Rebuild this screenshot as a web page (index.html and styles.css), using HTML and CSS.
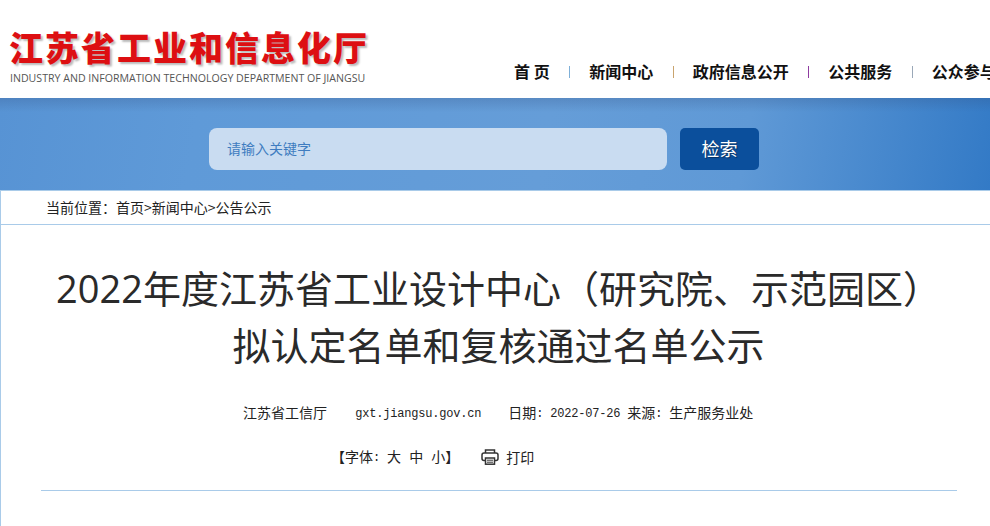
FILE: index.html
```html
<!DOCTYPE html>
<html lang="zh-CN">
<head>
    <meta charset="UTF-8">
    <title>2022年度江苏省工业设计中心（研究院、示范园区）拟认定名单和复核通过名单公示</title>
    <link rel="stylesheet" href="styles.css">
</head>
<body>
    <!-- Header -->
    <div class="header">
        <div class="logo">
            <div class="logo-cn">江苏省工业和信息化厅</div>
            <div class="logo-en">INDUSTRY AND INFORMATION TECHNOLOGY DEPARTMENT OF JIANGSU</div>
        </div>
        <div class="nav">
            <a class="nav-item">首 页</a>
            <i class="nav-sep sep-blue"></i>
            <a class="nav-item">新闻中心</a>
            <i class="nav-sep sep-orange"></i>
            <a class="nav-item">政府信息公开</a>
            <i class="nav-sep sep-purple"></i>
            <a class="nav-item">公共服务</a>
            <i class="nav-sep sep-gray"></i>
            <a class="nav-item">公众参与</a>
        </div>
    </div>

    <!-- Search -->
    <div class="banner">
        <div class="search-input">请输入关键字</div>
        <div class="search-btn">检索</div>
    </div>

    <!-- Article -->
    <div class="page">
        <div class="crumb">当前位置：首页&gt;新闻中心&gt;公告公示</div>
        <h1 class="title"><span class="title-num">2022</span>年度江苏省工业设计中心（研究院、示范园区）<br>拟认定名单和复核通过名单公示</h1>
        <div class="meta">
            <span>江苏省工信厅</span>
            <span class="latin site">gxt.jiangsu.gov.cn</span>
            <span class="date">日期<span class="latin">: 2022-07-26 </span>来源<span class="latin">: </span>生产服务业处</span>
        </div>
        <div class="tools">
            <span class="font-size">【字体<span class="latin">: </span>大 中 小】</span>
            <span class="print">
                <svg class="print-icon" width="18" height="16" viewBox="0 0 18 16" fill="none" stroke="#333" stroke-width="1.5">
                    <path d="M4.5 4V1h9V4"/>
                    <rect x="1" y="4" width="16" height="7.5" rx="2"/>
                    <rect x="4.5" y="9" width="9" height="6.2" fill="#fff"/>
                    <path d="M6 11.2h6M6 13.2h6" stroke-width="1"/>
                </svg>
                打印
            </span>
        </div>
        <div class="divider"></div>
    </div>
</body>
</html>
```
FILE: styles.css
```css
html, body {
    height: 100%;
}

body {
    margin: 0;
    overflow: hidden;
    background-color: #fff;
    color: #222;
    font-family: "Noto Sans CJK SC", "Liberation Sans", sans-serif;
}

.header {
    display: flex;
    height: 98px;
}

.logo {
    flex-shrink: 0;
    width: 390px;
    padding: 24px 0 0 10px;
    box-sizing: border-box;
}

.logo-cn {
    height: 44px;
    margin-left: -1px;
    font-family: "Noto Sans CJK SC", sans-serif;
    font-size: 34px;
    font-weight: 900;
    line-height: 46px;
    letter-spacing: 2px;
    color: #dd0f12;
    text-shadow: 2px 2px 2px #bbb;
    white-space: nowrap;
}

.logo-en {
    margin-top: 2px;
    font-family: "Open Sans", sans-serif;
    font-size: 10.6px;
    line-height: 16px;
    color: #555;
    white-space: nowrap;
}

.nav {
    display: flex;
    flex-shrink: 0;
    align-items: center;
    height: 24px;
    margin: 59px 0 0 124px;
}

.nav-item {
    font-size: 16px;
    font-weight: 700;
    line-height: 24px;
    color: #111;
    white-space: nowrap;
}

.nav-sep {
    width: 1px;
    height: 12px;
    margin: 2px 18.75px 0 19.75px;
}

.sep-blue { background-color: #7fb0d8; }
.sep-orange { background-color: #c9a46e; }
.sep-purple { background-color: #8e3ba0; }
.sep-gray { background-color: #9aa8b8; }

.banner {
    display: flex;
    height: 92px;
    padding: 30px 0 0 209px;
    box-sizing: border-box;
    background-color: #5f9ad6;
    background-image:
        linear-gradient(rgba(50, 80, 130, 0.25), rgba(50, 80, 130, 0) 14px),
        linear-gradient(100deg, #5793d4 0%, #5f9ad8 20%, #659dd8 55%, #5f99d6 75%, #337ac6 100%);
}

.search-input {
    width: 458px;
    height: 42px;
    padding-left: 18px;
    box-sizing: border-box;
    border-radius: 8px;
    background-color: #c9dcf1;
    font-size: 14px;
    line-height: 40px;
    color: #3f7cc0;
}

.search-btn {
    width: 79px;
    height: 42px;
    margin-left: 13px;
    border-radius: 5px;
    background-color: #0b4f9c;
    font-size: 18px;
    line-height: 40px;
    text-align: center;
    color: #fff;
    text-shadow: 1px 1px 1px rgba(0, 0, 0, 0.4);
}

.page {
    height: 336px;
    box-sizing: border-box;
    border-top: 1px solid #a9cbe9;
    border-left: 1px solid #a9cbe9;
}

.crumb {
    height: 33px;
    padding-left: 45px;
    border-bottom: 1px solid #a9cbe9;
    font-size: 14px;
    line-height: 33px;
}

.title {
    margin: 34px 0 0;
    padding-left: 6px;
    font-size: 38px;
    font-weight: 400;
    line-height: 56px;
    text-align: center;
    color: #2a2a2a;
}

.title-num {
    font-family: "Open Sans", sans-serif;
}

.meta {
    height: 24px;
    margin-top: 28px;
    padding-left: 242px;
    font-size: 14px;
    line-height: 24px;
}

.latin {
    font-family: "Liberation Mono", monospace;
    font-size: 12px;
    letter-spacing: -0.2px;
    word-spacing: 0;
    vertical-align: 1px;
}

.site {
    margin-left: 25px;
}

.date {
    margin-left: 24px;
}

.tools {
    display: flex;
    align-items: center;
    height: 24px;
    margin-top: 21px;
    padding-left: 330px;
    font-size: 14px;
    line-height: 24px;
}

.font-size {
    word-spacing: 5px;
}

.print {
    display: flex;
    align-items: center;
    margin-left: 22px;
}

.print-icon {
    margin-right: 7px;
}

.divider {
    height: 1px;
    margin: 21px 33px 0 40px;
    background-color: #a9cbe9;
}
```
